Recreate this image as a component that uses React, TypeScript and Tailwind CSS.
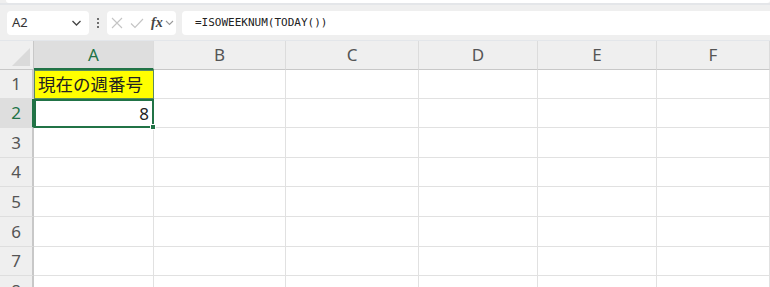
const cols = [
  { name: "A", w: "w-[120px]" },
  { name: "B", w: "w-[132px]" },
  { name: "C", w: "w-[133px]" },
  { name: "D", w: "w-[119px]" },
  { name: "E", w: "w-[119px]" },
  { name: "F", w: "flex-1" },
];

const rows = [
  { n: 1, h: "h-[29px]" },
  { n: 2, h: "h-[29px]" },
  { n: 3, h: "h-[30px]" },
  { n: 4, h: "h-[29px]" },
  { n: 5, h: "h-[30px]" },
  { n: 6, h: "h-[30px]" },
  { n: 7, h: "h-[29px]" },
  { n: 8, h: "h-[30px]" },
];

const jp = "font-['Noto_Sans','Noto_Sans_CJK_JP',sans-serif]";

const FormulaBar = () => (
  <div className="flex items-center h-[24px] mt-[6px]">
    <div className="ml-[7px] w-[82px] h-[24px] bg-white rounded-[4px] flex items-center justify-between px-[5px]">
      <span className={`text-[13px] text-[#333] ${jp}`}>A2</span>
      <svg width="11" height="8" viewBox="0 0 11 8" className="mr-[2px]">
        <path d="M1.5 2 L5.5 6 L9.5 2" fill="none" stroke="#444" strokeWidth="1.3" />
      </svg>
    </div>
    <div className="w-[18px] flex flex-col items-center gap-[2px]">
      <span className="w-[2px] h-[2px] bg-[#444] rounded-full" />
      <span className="w-[2px] h-[2px] bg-[#444] rounded-full" />
      <span className="w-[2px] h-[2px] bg-[#444] rounded-full" />
    </div>
    <div className="w-[69px] h-[24px] bg-white rounded-[4px] flex items-center pl-[4px] gap-[7px]">
      <svg width="12" height="12" viewBox="0 0 12 12">
        <path d="M1 1 L11 11 M11 1 L1 11" stroke="#c4c4c4" strokeWidth="1.1" fill="none" />
      </svg>
      <svg width="14" height="11" viewBox="0 0 14 11">
        <path d="M1 5.5 L5 9.5 L13 1" stroke="#c4c4c4" strokeWidth="1.1" fill="none" />
      </svg>
      <div className="flex items-center gap-[2px]">
        <span className="font-['Liberation_Serif',serif] italic font-bold text-[14px] text-[#444] leading-none">fx</span>
        <svg width="9" height="6" viewBox="0 0 9 6">
          <path d="M1 1 L4.5 4.5 L8 1" fill="none" stroke="#999" strokeWidth="1.1" />
        </svg>
      </div>
    </div>
    <div className="ml-[6px] flex-1 h-[24px] bg-white rounded-l-[4px] flex items-center pl-[13px]">
      <span className="font-['DejaVu_Sans_Mono',monospace] text-[11px] text-[#222]">=ISOWEEKNUM(TODAY())</span>
    </div>
  </div>
);

export default function App() {
  return (
    <div className={`w-[770px] h-[287px] bg-[#efefef] overflow-hidden ${jp}`}>
      <div className="h-[3px] ml-[6px] bg-white rounded-b-[4px]" />
      <div className="h-[2px] bg-[#e4e6e9]" />
      <FormulaBar />
      <div className="mt-[5px] border-t border-[#e3e6ea]">
        <div className="flex h-[29px]">
          <div className="w-[34px] bg-[#efefef] border-b border-[#c8c8c8] border-r border-r-[#c8c8c8] flex items-end justify-end p-[3px]">
            <svg width="18" height="18" viewBox="0 0 18 18">
              <path d="M18 0 L18 18 L0 18 Z" fill="#dadada" />
            </svg>
          </div>
          {cols.map((c) => (
            <div
              key={c.name}
              className={`${c.w} flex items-center justify-center text-[17px] ${
                c.name === "A"
                  ? "bg-[#dedede] text-[#217346] border-b-2 border-[#217346]"
                  : "bg-[#efefef] text-[#555] border-b border-[#c8c8c8]"
              } border-r border-r-[#dcdcdc]`}
            >
              {c.name}
            </div>
          ))}
        </div>
        {rows.map((r) => (
          <div key={r.n} className={`flex ${r.h}`}>
            <div
              className={`w-[34px] flex items-center justify-center text-[17px] border-b border-b-[#dedede] ${
                r.n === 2
                  ? "bg-[#dedede] text-[#217346] border-r-2 border-r-[#217346]"
                  : "bg-[#efefef] text-[#555] border-r-2 border-r-[#c8c8c8]"
              }`}
            >
              {r.n}
            </div>
            {cols.map((c) => {
              if (r.n === 1 && c.name === "A")
                return (
                  <div
                    key={c.name}
                    className={`${c.w} bg-[#ffff00] border border-[#5d8a5d] flex items-center pl-[3px] text-[17.5px] text-[#222]`}
                  >
                    現在の週番号
                  </div>
                );
              if (r.n === 2 && c.name === "A")
                return (
                  <div
                    key={c.name}
                    className={`${c.w} relative bg-white border-2 border-[#217346] flex items-center justify-end pr-[3px] text-[17px] text-[#222]`}
                  >
                    8
                    <span className="absolute -right-[4px] -bottom-[4px] w-[6px] h-[6px] bg-[#217346] border border-white" />
                  </div>
                );
              return (
                <div
                  key={c.name}
                  className={`${c.w} bg-white border-b border-r border-[#e1e1e1]`}
                />
              );
            })}
          </div>
        ))}
      </div>
    </div>
  );
}
